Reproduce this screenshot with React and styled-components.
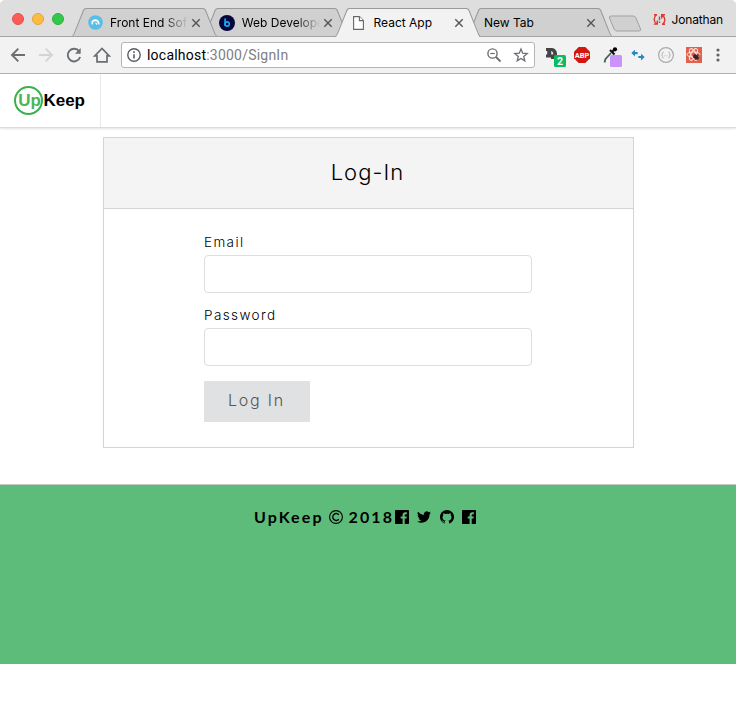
import React from "react";
import styled, { createGlobalStyle } from "styled-components";

const Global = createGlobalStyle`
  *, *::before, *::after { box-sizing: border-box; }
  body { margin: 0; background: #fff; color: #000; font-family: Inter, "Liberation Sans", sans-serif; }
  svg { display: block; flex: none; overflow: visible; }
`;

/* ---------- browser window ---------- */

const Window = styled.div`
  width: 736px;
  height: 709px;
  overflow: hidden;
  display: flex;
  flex-direction: column;
`;

const TabStrip = styled.div`
  height: 37px;
  flex: none;
  display: flex;
  background: #dedede;
  box-shadow: inset 0 -1px 0 #a3a3a3;
  border-radius: 5px 5px 0 0;
`;

const Lights = styled.div`
  display: flex;
  gap: 8px;
  width: 72px;
  flex: none;
  padding: 13px 0 0 12px;
`;

const Light = styled.span`
  width: 12px;
  height: 12px;
  border-radius: 50%;
  background: ${(p) => p.$fill};
  border: 1px solid ${(p) => p.$edge};
`;

const edgePath = "M0 28 L1.5 26 L11 2 Q12 0 14 0 L131 0 Q133 0 134 2 L143.500 26 L145 28 Z";
const facePath = "M1 28 L2.500 26 L12 2.500 Q12.700 1 14 1 L131 1 Q132.300 1 133 2.500 L142.500 26 L144 28 Z";

const TabBox = styled.div`
  position: relative;
  z-index: ${(p) => (p.$active ? 3 : p.$level)};
  width: 145px;
  height: ${(p) => (p.$active ? 29 : 28)}px;
  margin: 8px -13.300px 0 0;
  flex: none;
  display: flex;
  align-items: center;
  padding: 1px 14px 0 16px;
  &::before, &::after {
    content: "";
    position: absolute;
    inset: 0;
    z-index: -1;
  }
  &::before {
    background: #999;
    clip-path: path("${edgePath}");
  }
  &::after {
    background: ${(p) => (p.$active ? "#f2f2f2" : "#d0d0d0")};
    clip-path: path("${(p) => (p.$active ? facePath.replace("L144 28 Z", "L144 29 L1 29 Z") : facePath)}");
  }
`;

const TabIcon = styled.span`
  width: 16px;
  height: 16px;
  margin: 0 6px 0 -0.700px;
  flex: none;
  display: flex;
  align-items: center;
  justify-content: center;
`;

const TabTitle = styled.span`
  flex: 1;
  min-width: 0;
  padding-left: 0.8px;
  white-space: nowrap;
  font: 400 12px/16px Inter, sans-serif;
  ${(p) => p.$fade && "mask-image: linear-gradient(90deg, #000 54px, transparent 79px);"}
`;

const CloseSlot = styled.span`
  width: 14px;
  height: 14px;
  flex: none;
  display: flex;
  align-items: center;
  justify-content: center;
`;

const NewTabButton = styled.span`
  margin: 15px 0 0 9px;
  flex: none;
`;

const Profile = styled.div`
  margin-left: auto;
  padding: 11px 13px 0 0;
  display: flex;
  align-items: flex-start;
  gap: 5px;
  font: 400 12px/17px Inter, sans-serif;
  letter-spacing: -0.150px;
  svg { margin-top: 2px; }
`;

const Toolbar = styled.div`
  height: 37px;
  flex: none;
  display: flex;
  align-items: center;
  padding: 0 8px 1px 4px;
  background: #f2f2f2;
  border-bottom: 1px solid #b4b4b4;
`;

const Slot = styled.span`
  width: ${(p) => p.$w || 28}px;
  height: 24px;
  flex: none;
  display: flex;
  align-items: center;
  justify-content: center;
`;

const AddressBar = styled.div`
  width: 414px;
  height: 26px;
  margin: 0 5px;
  flex: none;
  display: flex;
  align-items: center;
  background: #fff;
  border: 1px solid #b5b5b5;
  border-radius: 3px;
`;

const Url = styled.span`
  flex: 1;
  padding-left: 1px;
  font: 400 14px/18px Roboto, sans-serif;
  letter-spacing: 0.220px;
  color: #808080;
  b { font-weight: 400; color: #000; }
`;

/* ---------- page ---------- */

const Nav = styled.nav`
  height: 54px;
  flex: none;
  display: flex;
  background: #fff;
  border-bottom: 1px solid #dcdcdc;
  box-shadow: 0 1px 2px rgba(34, 36, 38, 0.12);
`;

const Brand = styled.a`
  width: 101px;
  display: flex;
  align-items: center;
  padding-left: 14px;
  border-right: 1px solid #e8e8e8;
  font: 700 17px/20px "Liberation Sans", Arial, sans-serif;
  letter-spacing: -0.100px;
`;

const BrandRing = styled.span`
  width: 29px;
  height: 29px;
  margin-right: 0.6px;
  flex: none;
  display: flex;
  align-items: center;
  justify-content: center;
  border: 2px solid #3bb04f;
  border-radius: 50%;
  padding-left: 2px;
  color: #48b65a;
`;

const Card = styled.section`
  width: 531px;
  height: 311px;
  margin: 9px 0 36px 103px;
  flex: none;
  border: 1px solid #d4d4d5;
`;

const CardHeader = styled.h1`
  height: 71px;
  margin: 0;
  padding-right: 2px;
  background: #f4f4f4;
  border-bottom: 1px solid #d4d4d5;
  text-align: center;
  font: 300 22px/69px Inter, sans-serif;
  letter-spacing: 1.050px;
`;

const Form = styled.form`
  display: flex;
  flex-direction: column;
  align-items: flex-start;
  padding: 24px 101px 0 100px;
`;

const Label = styled.label`
  height: 22px;
  font: 300 13.500px/18px Inter, sans-serif;
  letter-spacing: 1.400px;
`;

const Input = styled.input`
  width: 328px;
  height: 38px;
  margin: 0 0 13px;
  padding: 0 14px;
  border: 1px solid #dededf;
  border-radius: 4px;
  background: #fff;
  outline: none;
`;

const Submit = styled.button`
  width: 106px;
  height: 41px;
  margin-top: 2px;
  padding: 0 1px 3px 0;
  border: 0;
  background: #e0e1e2;
  color: #555657;
  font: 300 16px/38px Inter, sans-serif;
  letter-spacing: 1.800px;
`;

const Footer = styled.footer`
  height: 180px;
  flex: none;
  display: flex;
  justify-content: center;
  align-items: flex-start;
  padding: 23px 6px 0 0;
  background: #5ebc7b;
  border-top: 1px solid #c3cbc5;
  font: 700 16px/18px Lato, sans-serif;
  letter-spacing: 2.100px;
`;

const CopyMark = styled.span`
  display: flex;
  margin: 2px 6px 0 5px;
`;

const Socials = styled.span`
  display: flex;
  gap: 8.300px;
  padding: 2px 0 0 1px;
`;

/* ---------- icons ---------- */

const Close = () => (
  <svg width="8" height="8" viewBox="0 0 8 8"><path d="M.3.3 7.700 7.700M7.700.3.3 7.700" stroke="#555" strokeWidth="1.4" /></svg>
);

const Stroke = ({ children, color = "#6b6e72", w = 16 }) => (
  <svg width={w} height={w} viewBox="0 0 16 16" fill="none" stroke={color} strokeWidth="1.9">{children}</svg>
);

const Facebook = () => (
  <svg width="14" height="14" viewBox="0 0 14 14">
    <path d="M.8 0h12.400q.8 0 .8.8v12.400q0 .8-.8.8H9.700V8.600h1.800l.3-2.100H9.700V5.200q0-1 1-1h1.200V2.300q-.8-.1-1.600-.1-2.700 0-2.700 2.800v1.500H5.700v2.100h1.900V14H.8q-.8 0-.8-.8V.8Q0 0 .8 0Z" />
  </svg>
);

const Twitter = () => (
  <svg width="14" height="14" viewBox="0 0 24 24">
    <path d="M24 4.600a10 10 0 0 1-2.800.8 5 5 0 0 0 2.100-2.700c-1 .6-2 1-3.100 1.200a4.900 4.900 0 0 0-8.400 4.500A14 14 0 0 1 1.700 3.200a4.900 4.900 0 0 0 1.500 6.500 5 5 0 0 1-2.200-.6v.1a4.900 4.900 0 0 0 4 4.800 5 5 0 0 1-2.300.1 4.900 4.900 0 0 0 4.600 3.400A10 10 0 0 1 0 19.500 14 14 0 0 0 7.500 21.700c9.100 0 14.400-7.700 14-14.600A10 10 0 0 0 24 4.600Z" />
  </svg>
);

const Github = () => (
  <svg width="14" height="14" viewBox="0 0 14 14">
    <path d="M5 13.600v-1.200c-1.800.3-2.300-.5-2.700-1.300-.2-.4-.5-.7-.9-.9.8-.2 1.300.3 1.700.9.5.8 1.200.7 1.900.4.1-.5.3-.8.600-1C3.500 10.200 2.500 9.200 2.500 7.200c0-.8.3-1.500.8-2-.2-.6-.1-1.500.1-2 .7 0 1.300.3 1.900.7a7 7 0 0 1 3.400 0c.6-.4 1.200-.7 1.900-.7.2.5.3 1.400.1 2 .5.5.8 1.200.8 2 0 2-1 3-3.100 3.300.4.3.6.8.6 1.500v1.600A7 7 0 1 0 5 13.600Z" />
  </svg>
);

const Reload = () => (
  <Stroke><path d="M13.200 4.400A6.300 6.300 0 1 0 14.100 10" /><path d="M14.700 1v5.800H8.900l2.300-2.300Z" fill="#6b6e72" stroke="none" /></Stroke>
);

const tabs = [
  {
    title: "Front End Sof", fade: true, level: 2,
    icon: <svg width="15" height="15" viewBox="0 0 15 15"><circle cx="7.5" cy="7.500" r="7.300" fill="#59bee5" /><path d="M4.300 9.300Q3.700 5.400 7.200 5.200q3.200 0 3.700 4.200" stroke="#fff" strokeWidth="1.700" fill="none" /><path d="M7.300 7.800q1.400.2 1.300 2" stroke="#fff" strokeWidth="1.100" fill="none" /></svg>,
  },
  {
    title: "Web Develope", fade: true, level: 1,
    icon: <svg width="16" height="16" viewBox="0 0 16 16"><circle cx="8" cy="8" r="8" fill="#06063f" /><path d="M6.100 3.500v7.500" stroke="#19a7ee" strokeWidth="1.700" /><circle cx="8.200" cy="9" r="2.100" stroke="#19a7ee" strokeWidth="1.600" fill="none" /></svg>,
  },
  {
    title: "React App", active: true,
    icon: <svg width="11" height="14" viewBox="0 0 11 14" fill="#fff" stroke="#666" strokeWidth="1.100"><path d="M.6.600h5.800l4 4v8.800H.6Z" /><path d="M6.400.600v4h4" /></svg>,
  },
  { title: "New Tab", level: 1 },
];

function BrowserTabs() {
  return (
    <TabStrip>
      <Lights>
        <Light $fill="#fc5b57" $edge="#e5504c" />
        <Light $fill="#fdbc40" $edge="#e2a63a" />
        <Light $fill="#34c84a" $edge="#2bb03b" />
      </Lights>
      {tabs.map((t) => (
        <TabBox key={t.title} $active={t.active} $level={t.level}>
          {t.icon && <TabIcon>{t.icon}</TabIcon>}
          <TabTitle $fade={t.fade}>{t.title}</TabTitle>
          <CloseSlot><Close /></CloseSlot>
        </TabBox>
      ))}
      <NewTabButton>
        <svg width="34" height="17" viewBox="0 0 34 17"><path d="M3 1h22q2 0 3 2l4.500 11q.5 2-1.500 2H9q-2 0-3-2L1.500 3Q1 1 3 1Z" fill="#d0d0d0" stroke="#a1a1a1" /></svg>
      </NewTabButton>
      <Profile>
        <svg width="13" height="13" viewBox="0 0 13 13" fill="none" stroke="#d93a33" strokeWidth="1.400">
          <path d="M3.700 1.500C.3 4 .3 8.500 3.800 11M4.300 7.600v3.500H.8M1 1.800h3" />
          <path d="M9.300 11.500c3.400-2.500 3.400-7-.1-9.500M8.700 5.400V1.700H12M9 11.200h3" />
          <path d="M6.500 3.500v3.700M6.500 8.400v1.500" />
        </svg>
        Jonathan
      </Profile>
    </TabStrip>
  );
}

function BrowserToolbar() {
  return (
    <Toolbar>
      <Slot><Stroke><path d="M15 8H2.500M8.300 1.700 2 8l6.300 6.300" /></Stroke></Slot>
      <Slot><Stroke color="#d3d4d5"><path d="M1 8h12.500M7.700 1.700 14 8l-6.300 6.300" /></Stroke></Slot>
      <Slot><Reload /></Slot>
      <Slot><Stroke><path d="M.8 8.800 8 1.500l7.200 7.300H13v6H3v-6Z" strokeWidth="1.700" /></Stroke></Slot>
      <AddressBar>
        <Slot $w={24}>
          <svg width="14" height="14" viewBox="0 0 14 14" fill="none" stroke="#5a5d61"><circle cx="7" cy="7" r="6.200" strokeWidth="1.400" /><path d="M7 6.200v4.300M7 3.300v1.600" strokeWidth="1.600" /></svg>
        </Slot>
        <Url><b>localhost</b>:3000/SignIn</Url>
        <Slot $w={27}>
          <svg width="14" height="14" viewBox="0 0 14 14" fill="none" stroke="#6b6e72"><circle cx="5.500" cy="5.500" r="4.600" strokeWidth="1.400" /><path d="m9 9 4.500 4.500" strokeWidth="1.800" /><path d="M3.200 5.500h4.600" strokeWidth="1.200" /></svg>
        </Slot>
        <Slot $w={27}>
          <svg width="14" height="14" viewBox="0 0 14 14" fill="none" stroke="#6b6e72" strokeWidth="1.300"><path d="m7 1 1.700 4.200 4.500.3-3.500 2.900 1.100 4.400L7 10.400l-3.800 2.400 1.100-4.400L.8 5.500l4.500-.3Z" /></svg>
        </Slot>
      </AddressBar>
      <Slot>
        <svg width="20" height="20" viewBox="0 0 20 20">
          <path d="M2 3h6q4.500.5 5 5.500v5.500H7v-1.500H2V9.500h1.200V6H2Z" fill="#444" /><path d="M7.200 6q2.300.6 2 3.500H7.200Z" fill="#e4e4e4" />
          <rect x="10" y="10" width="12" height="12" rx="1.500" fill="#08bd60" />
          <text x="16" y="19.800" fill="#fff" textAnchor="middle" fontFamily="Roboto, sans-serif" fontWeight="700" fontSize="10.500">2</text>
        </svg>
      </Slot>
      <Slot>
        <svg width="16" height="16" viewBox="0 0 16 16"><path d="M4.700 0h6.600L16 4.700v6.600L11.300 16H4.700L0 11.300V4.700Z" fill="#d41510" /><text x="8" y="11" fill="#fff" textAnchor="middle" fontFamily="Roboto, sans-serif" fontWeight="700" fontSize="8" textLength="14.500" lengthAdjust="spacingAndGlyphs">ABP</text></svg>
      </Slot>
      <Slot>
        <svg width="20" height="20" viewBox="0 0 20 20"><path d="M4.500 17.500 5.500 14l5.500-6" stroke="#476350" strokeWidth="1.800" fill="none" /><path d="m10 5 4.500 4.500M12 7l3-3" stroke="#111" strokeWidth="2.200" /><circle cx="15" cy="4.300" r="2.100" /><rect x="10" y="10" width="12" height="12" rx="1.500" fill="#c993fa" /></svg>
      </Slot>
      <Slot>
        <svg width="14" height="12" viewBox="0 0 14 12"><path d="m.3 4 3.700-3.300v2.300h2.700v2.200H4v2.300ZM13.700 8 10 4.700v2.200H7.300v2.200H10v2.400Z" fill="#218bc1" /></svg>
      </Slot>
      <Slot>
        <svg width="16" height="16" viewBox="0 0 16 16" fill="none" stroke="#aaa"><circle cx="8" cy="8" r="7.400" strokeWidth="1.200" /><path d="M5.700 5q-1.300 0-1.300 1.500T3.600 8q.8 0 .8 1.500T5.700 11M10.300 5q1.300 0 1.300 1.500t.8 1.500q-.8 0-.8 1.500T10.300 11M6.400 8.800h.9M8.600 8.800h.9" strokeWidth=".9" /></svg>
      </Slot>
      <Slot>
        <svg width="16" height="16" viewBox="0 0 16 16"><path d="M0 0h16v16H0Z" fill="#e3604c" /><g fill="none" stroke="#fbe4df" strokeWidth="1"><ellipse cx="7.500" cy="7.500" rx="6.500" ry="2.600" /><ellipse cx="7.500" cy="7.500" rx="6.500" ry="2.600" transform="rotate(60 7.500 7.500)" /><ellipse cx="7.500" cy="7.500" rx="6.500" ry="2.600" transform="rotate(120 7.500 7.500)" /></g><ellipse cx="10" cy="10" rx="2" ry="3.300" transform="rotate(-45 10 10)" fill="#382522" /><path d="M7 10.500 13.500 8.500M9 13l3-6" stroke="#382522" strokeWidth=".8" /></svg>
      </Slot>
      <Slot $w={20}>
        <svg width="4" height="14" viewBox="0 0 4 14" fill="#606367"><circle cx="2" cy="2" r="1.600" /><circle cx="2" cy="7" r="1.600" /><circle cx="2" cy="12" r="1.600" /></svg>
      </Slot>
    </Toolbar>
  );
}

export default function App() {
  return (
    <Window>
      <Global />
      <BrowserTabs />
      <BrowserToolbar />
      <Nav>
        <Brand><BrandRing>Up</BrandRing>Keep</Brand>
      </Nav>
      <Card>
        <CardHeader>Log-In</CardHeader>
        <Form>
          <Label htmlFor="email">Email</Label>
          <Input id="email" type="email" />
          <Label htmlFor="password">Password</Label>
          <Input id="password" type="password" />
          <Submit type="button">Log In</Submit>
        </Form>
      </Card>
      <Footer>
        UpKeep
        <CopyMark>
          <svg width="14" height="14" viewBox="0 0 14 14" fill="none" stroke="#000"><circle cx="7" cy="7" r="6.400" strokeWidth="1.100" /><path d="M9.900 4.700A3.500 3.500 0 1 0 9.900 9.300" strokeWidth="1.300" /></svg>
        </CopyMark>
        2018
        <Socials><Facebook /><Twitter /><Github /><Facebook /></Socials>
      </Footer>
    </Window>
  );
}
